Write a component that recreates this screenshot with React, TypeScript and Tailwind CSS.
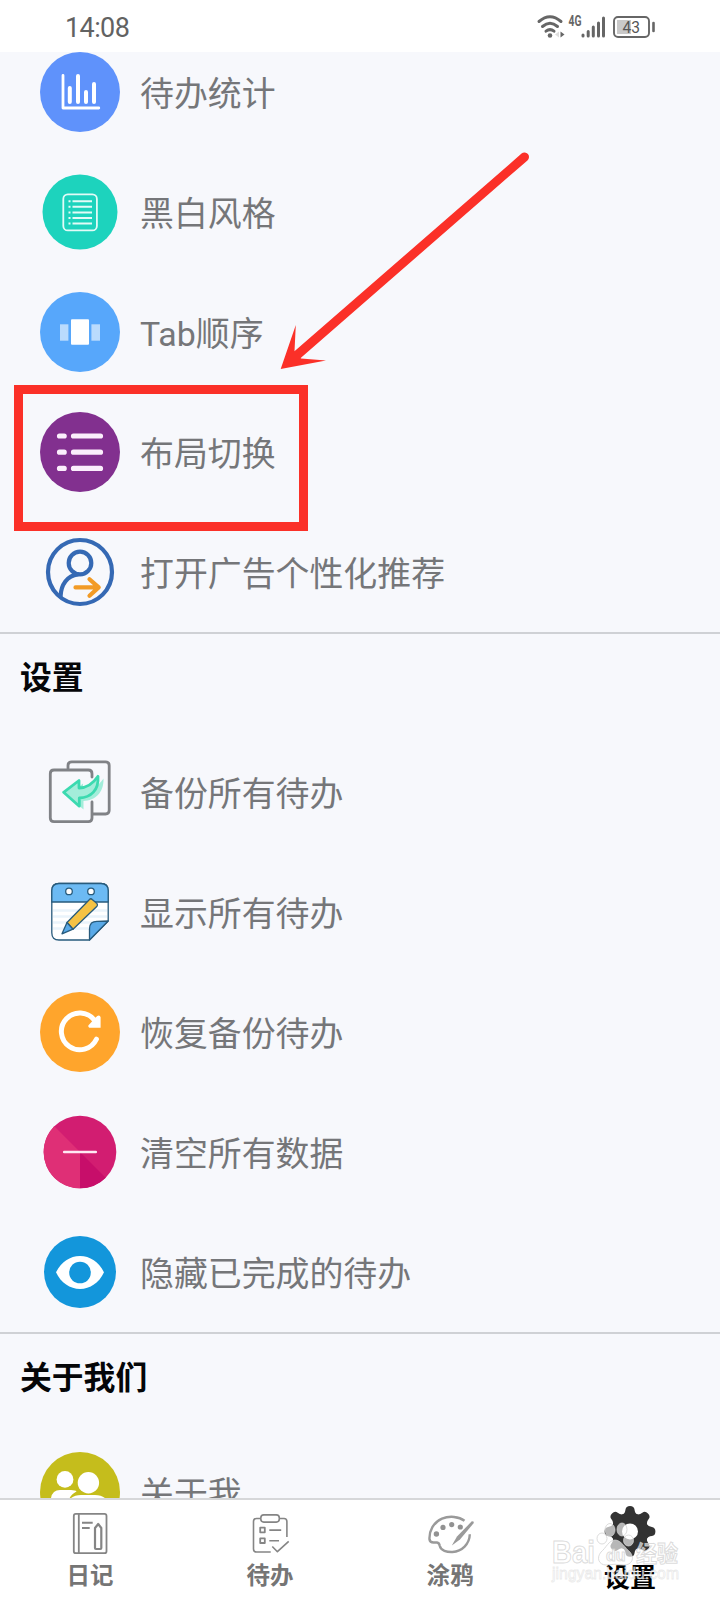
import type { ReactNode } from "react";

type Item = { label: string; icon: ReactNode };

const todoItems: Item[] = [
  {
    label: "待办统计",
    icon: (
      <>
        <circle cx="40" cy="40" r="40" fill="#5f92fb" />
        <g fill="none" stroke="#fff" strokeLinecap="round">
          <path d="M23 23.5V56H58.8" strokeWidth="2.8" strokeLinejoin="round" />
          <path d="M29.8 36v14M38 24v26M46 40v10M54 32v18" strokeWidth="4" />
        </g>
      </>
    ),
  },
  {
    label: "黑白风格",
    icon: (
      <>
        <circle cx="40" cy="40" r="37.5" fill="#1dd3bd" />
        <g fill="none" stroke="#e2fbf7">
          <rect x="23.3" y="22.4" width="33.6" height="36" rx="4.5" strokeWidth="1.8" />
          <path d="M28.5 29.2h2M28.5 34.8h2M28.5 40.4h2M28.5 46h2M28.5 51.6h2" strokeWidth="2" />
          <path d="M32.5 29.2H52M32.5 34.8H52M32.5 40.4H52M32.5 46H52M32.5 51.6H52" strokeWidth="2" />
        </g>
      </>
    ),
  },
  {
    label: "Tab顺序",
    icon: (
      <>
        <circle cx="40" cy="40" r="40" fill="#57a7fb" />
        <rect x="20" y="32.3" width="8.4" height="16.4" fill="#badbfd" />
        <rect x="51.4" y="32.3" width="8.6" height="16.4" fill="#badbfd" />
        <rect x="31" y="27.3" width="18" height="25.4" rx="1" fill="#fff" />
      </>
    ),
  },
  {
    label: "布局切换",
    icon: (
      <>
        <circle cx="40" cy="40" r="40" fill="#82308f" />
        <path
          d="M19.5 24h4.7M33.5 24h27M19.5 40.2h4.7M33.5 40.2h27M19.5 56.4h4.7M33.5 56.4h27"
          stroke="#fbeefc"
          strokeWidth="5.2"
          strokeLinecap="round"
        />
      </>
    ),
  },
  {
    label: "打开广告个性化推荐",
    icon: (
      <g fill="none" strokeWidth="4.2" strokeLinecap="round" strokeLinejoin="round">
        <g stroke="#3569b4">
          <circle cx="40" cy="40" r="32" />
          <circle cx="40" cy="31" r="11.3" />
          <path d="M20.6 64C21 53 27 43.5 38 42.3" />
        </g>
        <path d="M35.5 55.4H58.5M49.5 47.2l9.2 8.2-9.2 8.4" stroke="#f29b26" />
      </g>
    ),
  },
];

const settingItems: Item[] = [
  {
    label: "备份所有待办",
    icon: (
      <>
        <g fill="none" stroke="#808286" strokeWidth="2.8" strokeLinecap="round">
          <path d="M28 16.5V13.5Q28 9.8 31.7 9.8H65.5Q69.2 9.8 69.2 13.5V58.3Q69.2 62 65.5 62H53" />
          <path d="M52 25V21.7Q52 18 48.3 18H14Q10.3 18 10.3 21.7V66Q10.3 69.7 14 69.7H48.3Q52 69.7 52 66V50" />
        </g>
        <path d="M63.5 26.5C64 41 55 48.5 43.5 49V57.5L28 43.5 43 31.5V39C53 38.5 58 34 63.5 26.5Z" fill="#a3edda" />
        <path
          d="M58 24.3C59 38 51 45.5 39.3 46V54.2L23.6 40.3 39 28.5V36C48 36 53.5 31 58 24.3Z"
          fill="#a3edda"
          stroke="#3cdab0"
          strokeWidth="2.8"
          strokeLinejoin="round"
        />
      </>
    ),
  },
  {
    label: "显示所有待办",
    icon: (
      <g stroke="#285b7c" strokeWidth="1.3" strokeLinejoin="round">
        <path d="M19 11.5H61Q68.2 11.5 68.2 18.7V49L49.5 68H19Q11.8 68 11.8 60.8V18.7Q11.8 11.5 19 11.5Z" fill="#fff" />
        <path d="M13 38.5h54M13 44.5h54M13 50.5h40M13 56.5h36" stroke="#eaf4fb" strokeWidth="2.5" />
        <path d="M11.8 30V18.7Q11.8 11.5 19 11.5H61Q68.2 11.5 68.2 18.7V30Z" fill="#6cbaf3" />
        <circle cx="29" cy="19.4" r="3.3" fill="#fff" />
        <circle cx="51" cy="19.4" r="3.3" fill="#fff" />
        <path d="M49.5 68V57Q49.5 49 57.5 49.3L68.2 49Z" fill="#5aaae8" />
        <path d="M27 50.5 49.5 27.5Q50.8 26 52.2 27.5L57 31.6Q58 33 57 34.2L33 57.2Z" fill="#f5c244" />
        <path d="M27 50.5 33 57.2 22 61.8Z" fill="#5aaae8" />
      </g>
    ),
  },
  {
    label: "恢复备份待办",
    icon: (
      <>
        <circle cx="40" cy="40" r="40" fill="#ffa52c" />
        <path d="M56.4 47.2A18.4 18.4 0 1 1 54.4 28.2" fill="none" stroke="#fff" strokeWidth="5" strokeLinecap="round" />
        <path d="M60.6 25.2V35.8H49.4Q47.2 34.2 49.2 32.4L57.2 23.9Q60 22.6 60.6 25.2Z" fill="#fff" />
      </>
    ),
  },
  {
    label: "清空所有数据",
    icon: (
      <>
        <circle cx="40" cy="40" r="36.3" fill="#d21d71" />
        <path d="M40 40 14.3 14.3A36.3 36.3 0 0 0 40 76.3Z" fill="#df2f76" />
        <path d="M40 40V76.3A36.3 36.3 0 0 0 65.7 65.7Z" fill="#c70e6a" />
        <path d="M24.2 40H55.8" stroke="#ffe9f3" strokeWidth="2.6" strokeLinecap="round" />
      </>
    ),
  },
  {
    label: "隐藏已完成的待办",
    icon: (
      <>
        <circle cx="40" cy="40" r="36" fill="#1396db" />
        <path d="M16 40.3C21 30 30 24 40 24S59 30 64 40.3C59 51 50 57 40 57S21 51 16 40.3Z" fill="#fff" />
        <circle cx="40" cy="40.5" r="10.8" fill="#1396db" />
      </>
    ),
  },
];

const aboutItems: Item[] = [
  {
    label: "关于我",
    icon: (
      <>
        <circle cx="40" cy="40" r="40" fill="#c5bd1c" />
        <g fill="#fff">
          <circle cx="25" cy="27.4" r="8.4" />
          <path d="M11 46Q12.5 38 20 38H31Q35.5 38 36.5 39.5Q30 43 29 48H11Z" />
          <circle cx="48.4" cy="30.7" r="10.7" />
          <path d="M30 47Q34 43 41 43H55Q62 43 66 47V60H30Z" />
        </g>
      </>
    ),
  },
];

const GEAR_ANGLES = [0, 45, 90, 135, 180, 225, 270, 315];

const tabs = [
  {
    label: "日记",
    active: false,
    icon: (
      <g fill="none" stroke="#858585" strokeWidth="1.8" strokeLinejoin="round">
        <rect x="11.8" y="9.9" width="32.7" height="39.3" rx="2" />
        <path d="M16.8 10v39" />
        <path d="M20 18.7h10.7M20 23.9h7.7" strokeWidth="2" />
        <path d="M33 44V24L36.2 20 39.3 24V44Q39.3 45 38.3 45H34Q33 45 33 44Z" strokeWidth="2.2" />
      </g>
    ),
  },
  {
    label: "待办",
    active: false,
    icon: (
      <g fill="none" stroke="#858585" strokeWidth="1.6" strokeLinejoin="round">
        <path d="M18.5 14.5H14.5Q11.5 14.5 11.5 17.5V45Q11.5 48 14.5 48H28.7M37.5 14.5H42Q44.9 14.5 44.9 17.5V33" />
        <rect x="18.8" y="10.9" width="18.5" height="7.2" rx="3" />
        <rect x="18.2" y="23.7" width="4.6" height="4.6" strokeWidth="1.8" />
        <rect x="18.2" y="34.4" width="4.6" height="4.6" strokeWidth="1.8" />
        <path d="M27.3 26.1H39.2M27.3 36.8H37M30.3 42.5 35.4 47.7 46.7 37.3" />
      </g>
    ),
  },
  {
    label: "涂鸦",
    active: false,
    icon: (
      <>
        <path
          d="M42.5 16.8C37 12.5 27.5 11.5 20 14.7C11.5 18.5 7 26.5 7.5 35.5Q8 38.5 11.5 38.5L15 38.5Q17.3 38.8 17.8 42C18.7 46.5 25 48.3 30.5 48C40 47.5 47.5 40 47.8 30.3"
          fill="none"
          stroke="#9a9a9a"
          strokeWidth="2.4"
        />
        <path d="M51.5 17.6 49.8 17.3 35 32.5 29.8 41.4 38 35.5 51.8 19Z" fill="#9a9a9a" />
        <g fill="#929292">
          <circle cx="14.4" cy="30" r="2.7" />
          <circle cx="21" cy="23.4" r="2.6" />
          <circle cx="29.7" cy="20.6" r="2.6" />
          <circle cx="38.3" cy="23" r="2.6" />
        </g>
      </>
    ),
  },
  {
    label: "设置",
    active: true,
    icon: (
      <>
        <g fill="#333">
          <circle cx="28" cy="27.4" r="18.5" />
          {GEAR_ANGLES.map((angle) => (
            <path
              key={angle}
              d="M20 11Q23.2 9.5 23.5 5.5Q24 2 28 2T32.5 5.5Q32.8 9.5 36 11V18H20Z"
              transform={`rotate(${angle} 28 27.4)`}
            />
          ))}
        </g>
        <circle cx="28" cy="27.4" r="8" fill="#fff" />
      </>
    ),
  },
];

function StatusBar() {
  return (
    <div className="relative z-10 flex h-[52px] shrink-0 items-center justify-between bg-white pt-0.5 pr-[64px] pl-[65px]">
      <span className="pt-0.5 font-['Roboto'] text-[27px] leading-none tracking-[-0.6px] text-[#626262]">14:08</span>
      <svg className="h-[36px] w-[122px]" viewBox="0 0 122 36">
        <g fill="none" stroke="#666" strokeWidth="3" strokeLinecap="round">
          <path d="M5 12.5Q16 3 27 12.5" />
          <path d="M8.5 17.5Q16 11 23.5 17.5" />
          <path d="M12 22.2Q16 19 20 22.2" />
        </g>
        <circle cx="16" cy="26.5" r="2.3" fill="#666" />
        <path d="M25 22.5v6l-4-3z" fill="#ddd" />
        <path d="M26.5 22.5v6l4-3z" fill="#666" />
        <text x="34.5" y="16.5" textLength="13" lengthAdjust="spacingAndGlyphs" className="font-['Roboto'] text-[14.5px] font-bold" fill="#666">
          4G
        </text>
        <path d="M49 27v-1M54.2 27v-4.5M59.3 27v-9M64.5 27v-13M69.5 27V9" stroke="#666" strokeWidth="3" strokeLinecap="round" />
        <rect x="80" y="8" width="35" height="20" rx="4" fill="#fff" stroke="#666" strokeWidth="1.9" />
        <path d="M83 11h14v14H83z" fill="#c9c9c9" />
        <text x="88.5" y="24" textLength="17.5" lengthAdjust="spacingAndGlyphs" className="font-['Roboto'] text-[16.5px]" fill="#555">
          43
        </text>
        <path d="M119.5 14v8" stroke="#666" strokeWidth="2.6" strokeLinecap="round" />
      </svg>
    </div>
  );
}

function Row({ label, icon }: Item) {
  return (
    <li className="flex h-[120px] items-center pl-10">
      <svg className="size-20 shrink-0" viewBox="0 0 80 80">
        {icon}
      </svg>
      <span className="pt-1.5 pl-5 font-['Roboto','Noto_Sans_CJK_SC',sans-serif] text-[33.9px] leading-[34px] text-[#757679]">
        {label}
      </span>
    </li>
  );
}

function Section({ title, items }: { title?: string; items: Item[] }) {
  return (
    <section className="border-b-2 border-[#cfd1d5]">
      {title && <h2 className="h-[98px] pt-[25px] pl-5 text-[31.8px] leading-[33px] font-bold text-[#050608]">{title}</h2>}
      <ul>
        {items.map((item) => (
          <Row key={item.label} {...item} />
        ))}
      </ul>
    </section>
  );
}

function TabBar() {
  return (
    <nav className="relative z-10 grid h-[102px] shrink-0 grid-cols-4 border-t-2 border-[#d6d7d9] bg-white">
      {tabs.map((tab) => (
        <div key={tab.label} className="flex flex-col items-center pt-1">
          <svg className="size-14" viewBox="0 0 56 56">
            {tab.icon}
          </svg>
          {tab.active ? (
            <span className="mt-px text-[26px] leading-[30px] font-bold text-black">{tab.label}</span>
          ) : (
            <span className="text-[23.5px] leading-7 font-bold text-[#757575]">{tab.label}</span>
          )}
        </div>
      ))}
    </nav>
  );
}

// Highlight frame and pointer drawn over the list
function Annotation() {
  return (
    <>
      <div className="absolute top-[385px] left-[14px] h-[146px] w-[294px] border-9 border-[#fb3028]" />
      <svg className="absolute top-[130px] left-[260px] h-[260px] w-[300px]" viewBox="0 0 300 260">
        <path d="M264.5 27 36 226" stroke="#fb3028" strokeWidth="9" strokeLinecap="round" />
        <path d="M20.7 239 35.8 195 34.5 221 41 228.5 66 230.5Z" fill="#fb3028" />
      </svg>
    </>
  );
}

function Watermark() {
  return (
    <svg className="absolute top-[1516px] left-[545px] z-20 h-[74px] w-[145px]" viewBox="0 0 145 74">
      <g fill="#fff" fillOpacity="0.65" stroke="#d0d0d0" strokeOpacity="0.75" strokeWidth="1">
        <ellipse cx="57" cy="22.5" rx="5" ry="5.5" />
        <ellipse cx="65" cy="14" rx="5" ry="6.5" />
        <ellipse cx="77" cy="13.5" rx="5" ry="6.5" />
        <ellipse cx="83.5" cy="24.5" rx="5" ry="5.5" />
        <path d="M70 24C64 24 61 32 56 36C51 42 54 49 61 49Q70 47.5 79 49C87 49 90 42 85 36C80 32 76 24 70 24Z" />
        <text x="7" y="47" textLength="43" lengthAdjust="spacingAndGlyphs" className="font-['Liberation_Sans'] text-[31px] font-bold">
          Bai
        </text>
        <text x="61" y="45" className="font-['Liberation_Sans'] text-[16px] font-bold">
          du
        </text>
        <text x="91" y="46" textLength="42" lengthAdjust="spacingAndGlyphs" className="font-['Noto_Sans_CJK_SC'] text-[23px] font-bold">
          经验
        </text>
      </g>
      <text
        x="7"
        y="63"
        textLength="127"
        lengthAdjust="spacingAndGlyphs"
        className="font-['Liberation_Sans'] text-[16px]"
        fill="#fff"
        fillOpacity="0.7"
        stroke="#d8d8d8"
        strokeOpacity="0.55"
        strokeWidth="0.8"
      >
        jingyan.baidu.com
      </text>
    </svg>
  );
}

export default function App() {
  return (
    <div className="relative flex h-[1600px] w-[720px] flex-col overflow-hidden bg-[#f7f8fc] font-['Noto_Sans_CJK_SC',sans-serif]">
      <StatusBar />
      <main className="min-h-0 flex-1 overflow-hidden">
        <div className="-mt-5">
          <Section items={todoItems} />
          <Section title="设置" items={settingItems} />
          <Section title="关于我们" items={aboutItems} />
        </div>
      </main>
      <TabBar />
      <Annotation />
      <Watermark />
    </div>
  );
}
